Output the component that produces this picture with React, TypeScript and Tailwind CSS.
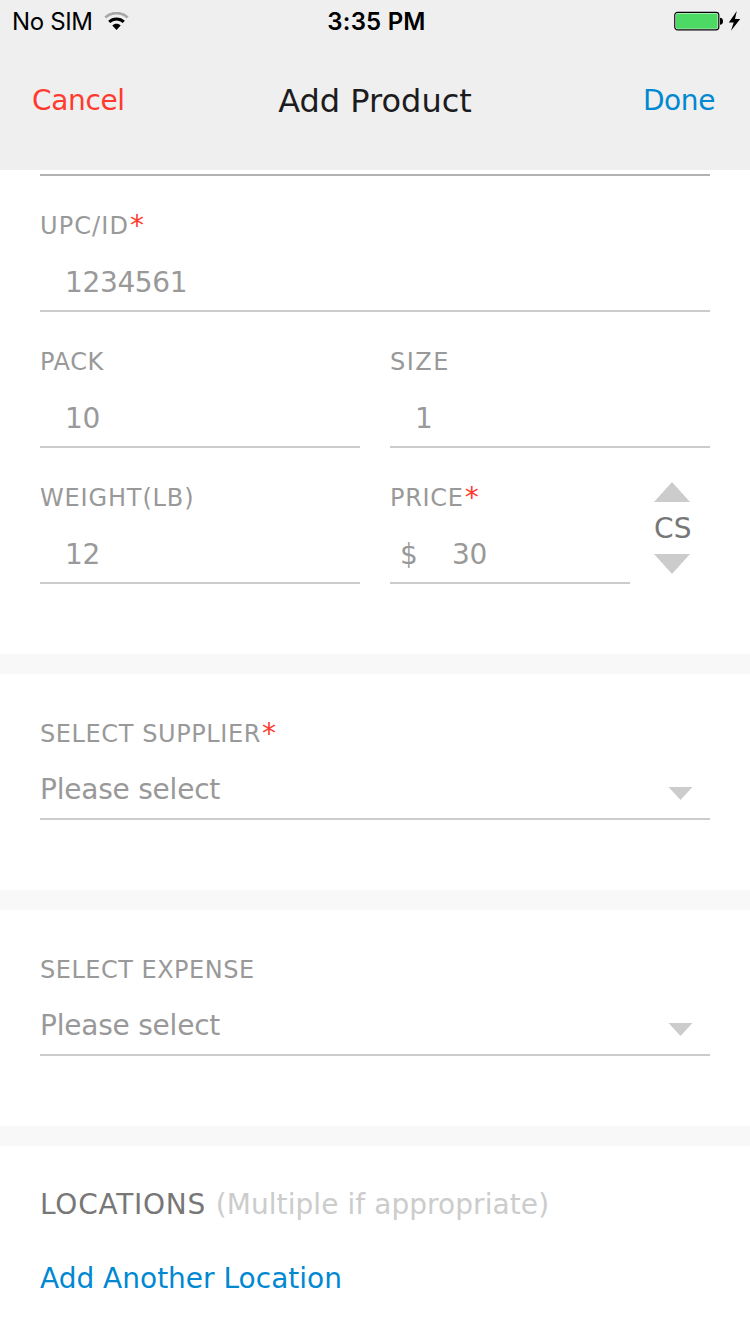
import type { ReactNode } from "react";

function StatusBar() {
  return (
    <div className="grid h-[41px] grid-cols-3 items-center pl-3 pr-[9px] font-['Inter',sans-serif] text-[24px] leading-[41px] text-black">
      <div className="flex items-center gap-2.5">
        <span className="whitespace-nowrap pt-px tracking-[-0.35px]">No SIM</span>
        <svg width="26" height="19" viewBox="0 0 26 19" fill="none" aria-hidden="true">
          <path d="M2.300 5.500C8.500 -0.300 18.500 -0.300 24.700 5.500" stroke="#a8a8a8" strokeWidth="2.800" />
          <path d="M6.200 9.900C10.200 5.900 16.800 5.900 20.800 9.900" stroke="#000" strokeWidth="3" />
          <path d="M9.300 13.600C11.500 11 15.500 11 17.700 13.600L13.500 18Z" fill="#000" />
        </svg>
      </div>
      <span className="pt-px text-center font-semibold tracking-[0.2px]">3:35 PM</span>
      <div className="flex items-center justify-end">
        <svg width="67" height="20" viewBox="0 0 67 20" aria-hidden="true">
          <rect x="0.800" y="1.300" width="44" height="17.600" rx="2.800" fill="#fff" stroke="#000" strokeWidth="1.200" />
          <rect x="2" y="2.500" width="41.600" height="15.200" rx="1.500" fill="#4cd964" />
          <path d="M46 6.700Q49 7 49 10.200T46 13.700Z" fill="#000" />
          <path d="M62.800 0L54.800 11.500H59.700L57 19.800L66.200 8H61Z" fill="#000" />
        </svg>
      </div>
    </div>
  );
}

function Label({ children, required, tracking = "" }: {
  children: ReactNode;
  required?: boolean;
  tracking?: string;
}) {
  return (
    <div className={`whitespace-nowrap text-[24px] leading-7 text-[#999] ${tracking}`}>
      {children}
      {required && (
        <span className="ml-px align-[-1px] text-[28px] leading-[0] text-[#ff3b30]">*</span>
      )}
    </div>
  );
}

function Field({ label, value, required, prefix, tracking, className = "" }: {
  label: string;
  value: string;
  required?: boolean;
  prefix?: string;
  tracking?: string;
  className?: string;
}) {
  return (
    <div className={`border-b-2 border-[#ccc] pb-[9px] pt-9 ${className}`}>
      <Label required={required} tracking={tracking}>{label}</Label>
      <div className="mt-[25px] flex h-9 text-[28px] leading-9 tracking-[-0.35px] text-[#999]">
        {prefix && <span className="w-[37px] pl-2.5">{prefix}</span>}
        <span className="pl-[25px]">{value}</span>
      </div>
    </div>
  );
}

function SelectField({ label, required, tracking }: {
  label: string;
  required?: boolean;
  tracking?: string;
}) {
  return (
    <section className="border-b-[20px] border-[#f8f8f8] px-10 pb-[70px] pt-[46px]">
      <Label required={required} tracking={tracking}>{label}</Label>
      <div className="mt-6 flex h-12 justify-between border-b-2 border-[#ccc] pr-[17px] text-[28px] leading-9 tracking-[-0.22px] text-[#999]">
        <span>Please select</span>
        <svg className="mt-[15px]" width="25" height="14" viewBox="0 0 25 14" fill="#ccc" aria-hidden="true">
          <path d="M0.500 0H24.500L12.500 13Z" />
        </svg>
      </div>
    </section>
  );
}

export default function App() {
  return (
    <div className="h-[1334px] w-[750px] overflow-hidden bg-white font-['DejaVu_Sans',Verdana,sans-serif]">
      <header className="h-[170px] bg-[#efefef]">
        <StatusBar />
        <div className="grid grid-cols-[1fr_auto_1fr] items-center pl-8 pr-[35px] pt-10 text-[28px] leading-10">
          <button className="text-left tracking-[-0.35px] text-[#ff3b30]">Cancel</button>
          <h1 className="pl-[3px] text-[32px] text-[#1c1c20]">Add Product</h1>
          <button className="text-right tracking-[-0.4px] text-[#0088d1]">Done</button>
        </div>
      </header>
      <main>
        <section className="border-b-[20px] border-[#f8f8f8] px-10 pb-[70px]">
          <div className="h-1.5 border-b-2 border-[#b2b2b2]" />
          <Field label="UPC/ID" value="1234561" required tracking="tracking-[1.1px]" />
          <div className="grid grid-cols-2 gap-x-[30px]">
            <Field label="PACK" value="10" tracking="tracking-[0.6px]" />
            <Field label="SIZE" value="1" tracking="tracking-[1.5px]" />
            <Field label="WEIGHT(LB)" value="12" tracking="tracking-[0.85px]" />
            <div className="flex">
              <Field label="PRICE" value="30" required prefix="$" tracking="tracking-[0.7px]" className="w-60" />
              <div className="ml-6 flex flex-col items-start pt-[34px]">
                <svg width="36" height="20" viewBox="0 0 36 20" fill="#ccc" aria-hidden="true">
                  <path d="M0 20L18 0L36 20Z" />
                </svg>
                <span className="mb-[7px] mt-[9px] text-[28px] leading-9 tracking-[0.3px] text-[#777]">CS</span>
                <svg width="36" height="20" viewBox="0 0 36 20" fill="#ccc" aria-hidden="true">
                  <path d="M0 0L18 20L36 0Z" />
                </svg>
              </div>
            </div>
          </div>
        </section>
        <SelectField label="SELECT SUPPLIER" required tracking="tracking-[0.6px]" />
        <SelectField label="SELECT EXPENSE" tracking="tracking-[0.5px]" />
        <section className="px-10 pt-[41px] text-[28px] leading-9">
          <h2 className="whitespace-nowrap tracking-[0.75px] text-[#777]">
            LOCATIONS{" "}
            <span className="tracking-[0.07px] text-[#ccc]">(Multiple if appropriate)</span>
          </h2>
          <button className="mt-[38px] text-[#0088d1]">Add Another Location</button>
        </section>
      </main>
    </div>
  );
}
